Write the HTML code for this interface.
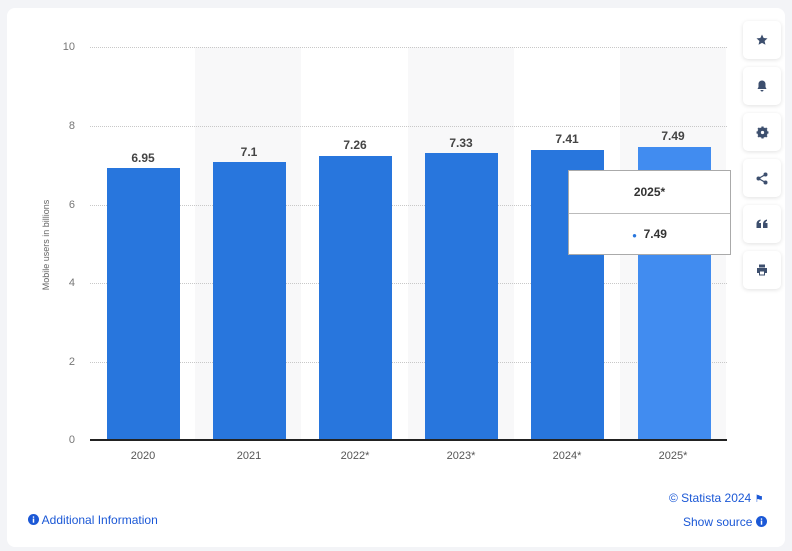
<!DOCTYPE html>
<html><head><meta charset="utf-8"><style>
body{margin:0;width:792px;height:551px;background:#f3f4f7;font-family:"Liberation Sans",sans-serif;position:relative;overflow:hidden}
.card{position:absolute;left:7px;top:8px;width:778px;height:539px;background:#fff;border-radius:8px}
.a{position:absolute}
.grid{position:absolute;left:90px;width:637px;border-top:1px dotted #c8c8c8}
.yl{position:absolute;width:30px;text-align:right;left:45px;font-size:11px;color:#777}
.band{position:absolute;top:47px;height:393px;width:106px;background:#f8f8f9}
.bar{position:absolute;width:73px;background:#2876dd;bottom:111px}
.vl{position:absolute;width:106px;text-align:center;font-size:12px;font-weight:bold;color:#444}
.xl{position:absolute;top:450px;width:106px;text-align:center;font-size:11px;color:#555}
.btn{position:absolute;left:743px;width:38px;height:38px;background:#fff;border-radius:5px;box-shadow:0 1px 4px rgba(0,0,0,.12);display:flex;align-items:center;justify-content:center}
.lnk{color:#1b58d6;font-size:12px}
</style></head><body>
<div class="card"></div>
<div class="band" style="left:195px"></div>
<div class="band" style="left:408px"></div>
<div class="band" style="left:620px"></div>
<div class="grid" style="top:47px"></div>
<div class="grid" style="top:126px"></div>
<div class="grid" style="top:205px"></div>
<div class="grid" style="top:283px"></div>
<div class="grid" style="top:362px"></div>
<div class="yl" style="top:41px">10</div>
<div class="yl" style="top:120px">8</div>
<div class="yl" style="top:199px">6</div>
<div class="yl" style="top:277px">4</div>
<div class="yl" style="top:356px">2</div>
<div class="yl" style="top:434px">0</div>
<div class="a" style="left:46px;top:245px;transform:translate(-50%,-50%) rotate(-90deg);font-size:9px;color:#666;white-space:nowrap">Mobile users in billions</div>
<div class="bar" style="left:107px;height:272px"></div>
<div class="bar" style="left:213px;height:278px"></div>
<div class="bar" style="left:319px;height:284px"></div>
<div class="bar" style="left:425px;height:287px"></div>
<div class="bar" style="left:531px;height:290px"></div>
<div class="bar" style="left:638px;height:293px;background:#418cf0"></div>
<div class="vl" style="left:90px;top:151px">6.95</div>
<div class="vl" style="left:196px;top:145px">7.1</div>
<div class="vl" style="left:302px;top:138px">7.26</div>
<div class="vl" style="left:408px;top:136px">7.33</div>
<div class="vl" style="left:514px;top:132px">7.41</div>
<div class="vl" style="left:620px;top:129px">7.49</div>
<div class="a" style="left:90px;top:439px;width:637px;height:2px;background:#222"></div>
<div class="xl" style="left:90px">2020</div>
<div class="xl" style="left:196px">2021</div>
<div class="xl" style="left:302px">2022*</div>
<div class="xl" style="left:408px">2023*</div>
<div class="xl" style="left:514px">2024*</div>
<div class="xl" style="left:620px">2025*</div>
<div class="a" style="left:568px;top:170px;width:161px;height:83px;background:#fff;border:1px solid #aaa">
<div style="height:42px;border-bottom:1px solid #bbb;text-align:center;line-height:42px;font-size:12px;font-weight:bold;color:#333">2025*</div>
<div style="text-align:center;line-height:40px;font-size:12px;font-weight:bold;color:#333"><span style="color:#2876dd;font-size:8px">●</span>&nbsp; 7.49</div>
</div>
<div class="btn" style="top:21px"><svg width="12" height="12" viewBox="0 0 24 24"><path fill="#3d4f6e" d="M12 1l3.3 7 7.7.8-5.8 5.2 1.7 7.6L12 17.7 5.1 21.6 6.8 14 1 8.8 8.7 8z"/></svg></div>
<div class="btn" style="top:67px"><svg width="12" height="12" viewBox="0 0 24 24"><path fill="#3d4f6e" d="M12 1c-4 0-7 3-7 7v6l-2 4h18l-2-4V8c0-4-3-7-7-7zM9 20a3 3 0 006 0z"/></svg></div>
<div class="btn" style="top:113px"><svg width="13" height="13" viewBox="0 0 24 24"><circle cx="12" cy="12" r="7" fill="none" stroke="#3d4f6e" stroke-width="5"/><path stroke="#3d4f6e" stroke-width="4" d="M12 1v22M1 12h22M4 4l16 16M20 4L4 20"/><circle cx="12" cy="12" r="3" fill="#fff"/></svg></div>
<div class="btn" style="top:159px"><svg width="12" height="13" viewBox="0 0 24 26"><circle cx="19" cy="5" r="4" fill="#3d4f6e"/><circle cx="19" cy="21" r="4" fill="#3d4f6e"/><circle cx="5" cy="13" r="4" fill="#3d4f6e"/><path stroke="#3d4f6e" stroke-width="2.5" fill="none" d="M19 5L5 13l14 8"/></svg></div>
<div class="btn" style="top:205px"><svg width="12" height="10" viewBox="0 0 24 20"><path fill="#3d4f6e" d="M1 10c0-5 3-8 8-9v3c-2 .5-3 2-3 4h4v10H1zM14 10c0-5 3-8 8-9v3c-2 .5-3 2-3 4h4v10h-9z"/></svg></div>
<div class="btn" style="top:251px"><svg width="12" height="12" viewBox="0 0 24 24"><path fill="#3d4f6e" d="M6 1h12v6H6zM2 8h20v10h-4v5H6v-5H2zM8 15v6h8v-6z"/></svg></div>
<div class="a lnk" style="left:669px;top:491px">© Statista 2024 <span style="font-size:10px">⚑</span></div>
<div class="a lnk" style="left:28px;top:513px"><svg width="11" height="11" viewBox="0 0 12 12" style="vertical-align:-1px"><circle cx="6" cy="6" r="6" fill="#1b58d6"/><rect x="5.2" y="5" width="1.6" height="4.5" fill="#fff"/><circle cx="6" cy="3.3" r="0.9" fill="#fff"/></svg> Additional Information</div>
<div class="a lnk" style="left:683px;top:515px">Show source <svg width="11" height="11" viewBox="0 0 12 12" style="vertical-align:-1px"><circle cx="6" cy="6" r="6" fill="#1b58d6"/><rect x="5.2" y="5" width="1.6" height="4.5" fill="#fff"/><circle cx="6" cy="3.3" r="0.9" fill="#fff"/></svg></div>
</body></html>
